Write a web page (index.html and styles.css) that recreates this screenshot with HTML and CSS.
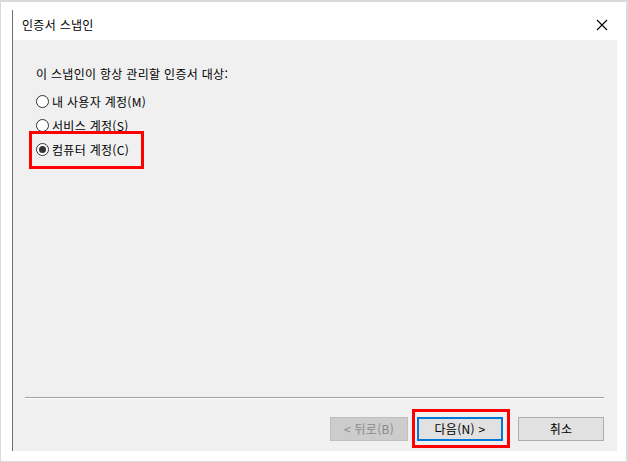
FILE: index.html
```html
<!DOCTYPE html>
<html lang="ko">
<head>
<meta charset="UTF-8">
<meta name="viewport" content="width=device-width, initial-scale=1.0">
<title>인증서 스냅인</title>
<link rel="stylesheet" href="styles.css">
</head>
<body>

<div class="frame">
    <div class="dialog">
        <div class="titlebar">
            <span class="title">인증서 스냅인</span>
            <svg class="close" width="12" height="12" viewBox="0 0 12 12">
                <path d="M1 1 L11 11 M11 1 L1 11" stroke="#000" stroke-width="1.1" fill="none"/>
            </svg>
        </div>

        <div class="panel">
            <div class="content">
                <p class="prompt">이 스냅인이 항상 관리할 인증서 대상:</p>
                <div class="options">
                    <label class="option"><span class="radio"></span>내 사용자 계정(M)</label>
                    <label class="option"><span class="radio"></span>서비스 계정(S)</label>
                    <label class="option marked"><span class="radio checked"></span>컴퓨터 계정(C)</label>
                </div>
            </div>

            <div class="separator"></div>

            <div class="buttons">
                <button class="btn disabled">&lt; 뒤로(B)</button>
                <button class="btn default marked">다음(N) &gt;</button>
                <button class="btn cancel">취소</button>
            </div>
        </div>
    </div>
</div>

</body>
</html>
```

FILE: styles.css
```css
html, body {
    margin: 0;
    padding: 0;
    background-color: #ffffff;
}

body {
    font-family: "Noto Sans CJK KR", "Noto Sans", sans-serif;
    font-size: 12px;
    letter-spacing: 0.3px;
    color: #000;
}

.frame {
    width: 628px;
    height: 462px;
    box-sizing: border-box;
    border: 1px solid #dadada;
    border-top-width: 2px;
    border-right-width: 2px;
    padding: 8px 9px 9px 11px;
}

.dialog {
    height: 441px;
    border-left: 1px solid #6e6e6e;
    display: flex;
    flex-direction: column;
}

.titlebar {
    height: 30px;
    display: flex;
    align-items: center;
    justify-content: space-between;
    padding: 0 9px 0 9px;
    background-color: #fff;
}

.title {
    line-height: 16px;
}

.close {
    display: block;
}

.panel {
    flex: 1;
    background-color: #f0f0f0;
    display: flex;
    flex-direction: column;
    padding: 26px 13px 10px 12px;
}

.content {
    flex: 1;
    padding-left: 11px;
}

.prompt {
    margin: 0 0 7px 0;
    line-height: 16px;
}

.options {
    display: flex;
    flex-direction: column;
}

.option {
    position: relative;
    display: flex;
    align-items: center;
    align-self: flex-start;
    height: 24px;
    gap: 3px;
}

.radio {
    width: 11px;
    height: 11px;
    border: 1px solid #333;
    border-radius: 50%;
    background-color: #fff;
    position: relative;
}

.radio.checked::after {
    content: "";
    position: absolute;
    left: 2px;
    top: 2px;
    width: 7px;
    height: 7px;
    border-radius: 50%;
    background-color: #333;
}

/* 빨간 강조 표시 */
.option.marked::after {
    content: "";
    position: absolute;
    left: -7px;
    right: -15px;
    top: -6px;
    bottom: -8px;
    border: 3px solid #ff0000;
}

.separator {
    height: 1px;
    background-color: #a0a0a0;
    border-bottom: 1px solid #fff;
    margin-bottom: 18px;
}

.buttons {
    display: flex;
    justify-content: flex-end;
}

.btn {
    position: relative;
    height: 24px;
    width: 86px;
    padding: 0;
    font-family: inherit;
    font-size: 12px;
    letter-spacing: 0.3px;
    line-height: 16px;
    color: #000;
    background-color: #e1e1e1;
    border: 1px solid #adadad;
    border-radius: 0;
}

.btn.disabled {
    width: 78px;
    color: #8b8b8b;
    background-color: #cccccc;
    border-color: #bfbfbf;
}

.btn.default {
    margin-left: 9px;
    border: 2px solid #0078d7;
}

.btn.cancel {
    margin-left: 15px;
}

.btn.marked::after {
    content: "";
    position: absolute;
    left: -7px;
    right: -9px;
    top: -10px;
    bottom: -9px;
    border: 3px solid #ff0000;
}
```
